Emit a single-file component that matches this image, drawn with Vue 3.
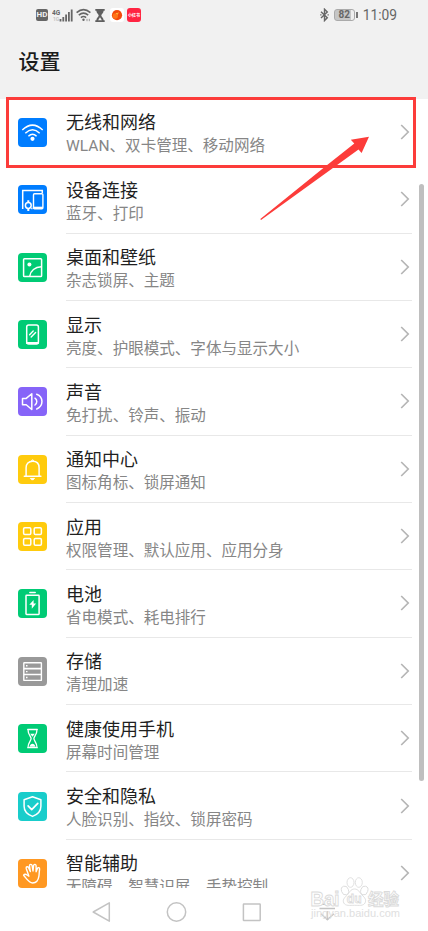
<script setup>
const rows = [
  { icon: 'wifi', color: '#007dff', title: '无线和网络', sub: 'WLAN、双卡管理、移动网络', plain: true },
  { icon: 'devices', color: '#007dff', title: '设备连接', sub: '蓝牙、打印' },
  { icon: 'wallpaper', color: '#00cb75', title: '桌面和壁纸', sub: '杂志锁屏、主题' },
  { icon: 'display', color: '#00cb75', title: '显示', sub: '亮度、护眼模式、字体与显示大小' },
  { icon: 'sound', color: '#8664f8', title: '声音', sub: '免打扰、铃声、振动' },
  { icon: 'bell', color: '#ffcb0d', title: '通知中心', sub: '图标角标、锁屏通知' },
  { icon: 'apps', color: '#ffcb0d', title: '应用', sub: '权限管理、默认应用、应用分身' },
  { icon: 'battery', color: '#00cb75', title: '电池', sub: '省电模式、耗电排行' },
  { icon: 'storage', color: '#999999', title: '存储', sub: '清理加速' },
  { icon: 'hourglass', color: '#00cb75', title: '健康使用手机', sub: '屏幕时间管理' },
  { icon: 'shield', color: '#19cdcb', title: '安全和隐私', sub: '人脸识别、指纹、锁屏密码' },
  { icon: 'hand', color: '#ff9822', title: '智能辅助', sub: '无障碍、智慧识屏、手势控制' },
]
</script>

<template>
  <div class="phone">
    <header class="top">
      <div class="status">
        <div class="status-left">
          <span class="hd">HD</span>
          <svg class="signal" width="21" height="15" viewBox="0 0 21 15">
            <text x="0" y="6.8" class="net">4G</text>
            <text x="1" y="12.5" class="net faint">1G</text>
            <path d="M8.5 13.500v-2.500M11.3 13.500V9M14.1 13.500V6.5M16.9 13.500V4M19.7 13.500V1.5" stroke="#666" stroke-width="1.8" />
          </svg>
          <svg class="net-wifi" width="15" height="14" viewBox="0 0 15 14" fill="none" stroke="#666" stroke-width="1.6">
            <path d="M.6 4.6Q7.5-1.4 14.4 4.6M2.8 7.2Q7.5 3.2 12.2 7.2M4.9 9.6Q7.5 7.4 10.1 9.6" />
            <circle cx="7.5" cy="11.8" r="1.2" fill="#666" stroke="none" />
            <path d="M11 10.8v2.4M13.3 10.8v2.4" stroke="#999" stroke-width="1" />
          </svg>
          <svg class="timer" width="10" height="13" viewBox="0 0 10 13">
            <path d="M.3 0h9.4v1.7H.3zM.3 11.3h9.4V13H.3zM1.3 1.5h7.4c0 2.8-2.4 3.6-2.4 5s2.4 2.2 2.4 5H7L5 8.2 3 11.5H1.3c0-2.8 2.4-3.6 2.4-5S1.3 4.3 1.3 1.5z" fill="#5f5f5f" />
          </svg>
          <svg class="ball" width="14" height="14" viewBox="0 0 14 14">
            <rect width="14" height="14" rx="3" fill="#fff" />
            <circle cx="7" cy="7.2" r="5.1" fill="#f24a0c" />
            <circle cx="5.3" cy="8" r="2.7" fill="#ff7417" />
            <path d="M6.2 5.2l1.2 1 .8-1.600" stroke="#ffd84a" fill="none" stroke-width=".9" />
          </svg>
          <span class="red-app">小红书</span>
        </div>
        <div class="status-right">
          <svg width="9" height="14" viewBox="0 0 9 14" fill="none" stroke="#666" stroke-width="1.4">
            <path d="M1 3.7l6.3 6L4.5 12.6V1.2L7.3 4 1 10" />
            <path d="M.2 6.9h1.3M7.5 6.9h1.3" />
          </svg>
          <span class="power">82</span>
          <i class="power-tip"></i>
          <span class="time">11:09</span>
        </div>
      </div>
      <h1>设置</h1>
    </header>

    <main class="list">
      <section v-for="row in rows" :key="row.icon" class="row">
        <svg class="icon" viewBox="0 0 29 29" fill="none" stroke="#fff" stroke-width="1.5" stroke-linecap="round" stroke-linejoin="round">
          <rect width="29" height="29" rx="4" :fill="row.color" stroke="none" />
          <g v-if="row.icon === 'wifi'" stroke-linecap="butt">
            <path d="M4.3 12Q14.5 2.2 24.7 12M7.3 15.2Q14.5 8.4 21.7 15.2M10.4 18.2Q14.5 14.4 18.6 18.2" />
            <circle cx="14.5" cy="20.8" r="2.1" fill="#fff" stroke="none" />
          </g>
          <g v-else-if="row.icon === 'devices'" stroke-linejoin="miter" stroke-linecap="butt">
            <path d="M4.7 24V5.5h19.6v2.4M13.2 23.5h1.3" />
            <rect x="15.5" y="8.8" width="9.4" height="15" rx="1" stroke-width="1.4" />
            <path d="M15.5 22.7h9.4" stroke-width="2" />
            <circle cx="10.3" cy="20.5" r="2.9" />
            <path d="M10.3 15.3v2.4M10.3 23.3v2.6" stroke-width="2" />
          </g>
          <g v-else-if="row.icon === 'wallpaper'">
            <rect x="5.6" y="5.7" width="18" height="17.8" rx=".8" />
            <circle cx="11.4" cy="11.4" r="2" fill="#fff" stroke="none" />
            <path d="M11.8 23C12.5 17.7 17 14 23.3 13.8" />
          </g>
          <g v-else-if="row.icon === 'display'">
            <rect x="8.7" y="5" width="11.7" height="18.9" rx="2" />
            <path d="M9 23h11" stroke-width="2.2" />
            <path d="M11.6 14.7l3.6-3.6M13.2 17l4.4-4.4" stroke-width="1.4" />
          </g>
          <g v-else-if="row.icon === 'sound'">
            <path d="M4.5 11.4h3.7l5.6-4.7v15.8l-5.6-4.8H4.5z" />
            <path d="M17 11.2c2.4 1.5 2.4 5.2 0 6.8M18.7 7.2c7 2.7 7 12.1 0 14.8" />
          </g>
          <g v-else-if="row.icon === 'bell'">
            <path d="M6.3 21.2h16.6M8.1 21v-8.2c0-4 2.5-6.6 6.5-6.6s6.5 2.6 6.5 6.6V21" />
            <path d="M13.5 5.6a1.2 1.2 0 0 1 2.2 0M12.7 23.4h3.8l-1.2 1.3h-1.4z" fill="#fff" stroke-width="1" />
          </g>
          <g v-else-if="row.icon === 'apps'">
            <rect x="5.6" y="5.8" width="7.2" height="6.7" rx="1.2" />
            <rect x="16.2" y="5.8" width="7.2" height="6.7" rx="1.2" />
            <rect x="5.6" y="16.5" width="7.2" height="6.7" rx="1.2" />
            <rect x="16.2" y="16.5" width="7.2" height="6.7" rx="1.2" />
          </g>
          <g v-else-if="row.icon === 'battery'" stroke-linejoin="miter">
            <rect x="8" y="6.3" width="13.1" height="19.1" rx=".6" />
            <path d="M11.9 3.5h5.3" />
            <path d="M15.6 11v3.6h2.5l-4.3 5.2v-4H11.3z" fill="#fff" stroke="none" />
          </g>
          <g v-else-if="row.icon === 'storage'" stroke-linecap="butt" stroke-width="1.4">
            <rect x="5.8" y="5.8" width="17.6" height="17.6" rx=".5" />
            <path d="M5.8 11.7h17.6M5.8 17.5h17.6" stroke-width="1.7" />
            <path d="M8 8.8h1.5M8 14.6h1.5M8 20.5h1.5" />
          </g>
          <g v-else-if="row.icon === 'hourglass'" stroke-width="1.3">
            <path d="M9.7 5.5h9.6M9.7 23.7h9.6M10 5.8c0 5 3.1 6.5 3.1 8.8S10 18.4 10 23.4M19 5.8c0 5-3.1 6.5-3.1 8.8s3.1 3.8 3.1 8.8" />
            <path d="M12.2 9.7h4.6l-2.3 3.1zM11.4 22.8c.7-2.1 1.8-3 3.1-3s2.4.9 3.1 3z" fill="#fff" stroke="none" />
          </g>
          <g v-else-if="row.icon === 'shield'">
            <path d="M14.5 4.8l8.4 3v6.4c0 4.7-3.2 8.2-8.4 10.2-5.2-2-8.4-5.5-8.4-10.2V7.8z" />
            <path d="M10.1 13.9l3.6 3.8 6.1-6.3" stroke-width="1.7" />
          </g>
          <g v-else stroke-width="1.4">
            <path d="M5.600 16.200c.8-1.300 2.300-1.100 3.400-.2l1.900 1.200-2.700-7.800c-.4-1.800 1.700-2.300 2.400-.7l1.700 3.800-.8-5.700c0-1.800 2.300-2 2.600-.2l.9 5.400.6-5.600c.4-1.600 2.500-1.200 2.500.4l0 5.900 1.300-3.300c.7-1.400 2.400-.8 2.200.8-.4 3.300-.4 4.600-.7 7-.6 4.400-2.700 6.800-6.300 6.800-3.500 0-5-2.900-9-7.800z" />
          </g>
        </svg>
        <div class="body" :class="{ plain: row.plain }">
          <div class="words">
            <div class="title">{{ row.title }}</div>
            <div class="sub">{{ row.sub }}</div>
          </div>
          <svg class="chevron" width="10" height="16" viewBox="0 0 10 16" fill="none" stroke="#b5b5b5" stroke-width="1.7">
            <path d="M1.2 1l7 7-7 7" />
          </svg>
        </div>
      </section>
    </main>

    <nav class="nav">
      <svg width="428" height="43" viewBox="0 0 428 43" fill="none" stroke="#c3c3c3" stroke-width="1.5" stroke-linejoin="round">
        <path d="M109.3 14.8v18.4L93.2 24z" />
        <circle cx="176.5" cy="24" r="9.2" />
        <rect x="243.4" y="15.9" width="16.8" height="16.6" rx=".5" />
        <path d="M319.500 16.200h15.500M319.500 20.400h15.500M327.400 23v8.500M321 25.800l6.400 6 6.400-6" />
      </svg>
    </nav>

    <i class="scrollbar"></i>

    <svg class="watermark" width="96" height="46" viewBox="0 0 96 46">
      <g fill="#fff" stroke="#dcdcdc" stroke-width=".9">
        <ellipse cx="37" cy="14.500" rx="3.500" ry="4.500" transform="rotate(-18 37 14.500)" />
        <ellipse cx="42.500" cy="6.500" rx="3.500" ry="4.800" />
        <ellipse cx="50.800" cy="6.500" rx="3.500" ry="4.800" />
        <ellipse cx="56.300" cy="14.500" rx="3.500" ry="4.500" transform="rotate(18 56.300 14.500)" />
        <path d="M46.500 13c4 0 5 3.500 7.500 6 3.200 3 4.500 5 3 8-1.800 3.200-6 2.300-10.500 2.300S37.500 30.200 35.800 27c-1.500-3 .3-5 3.400-8 2.400-2.500 3.300-6 7.300-6z" />
      </g>
      <text x="2.500" y="30.200" class="wm-bai" textLength="29" lengthAdjust="spacingAndGlyphs">Bai</text>
      <text x="38.800" y="27" class="wm-du">du</text>
      <text x="60" y="29.300" class="wm-cn">经验</text>
      <text x="3" y="41" class="wm-url" textLength="89" lengthAdjust="spacingAndGlyphs">jingyan.baidu.com</text>
    </svg>

    <svg class="mark" width="428" height="240" viewBox="0 0 428 240">
      <rect x="7.5" y="98.5" width="407" height="68" fill="none" stroke="#fc3c3a" stroke-width="3" />
      <path d="M260.300 219L324 167.500 354.300 143.500 350.800 139.800 369 136.800 361.600 153 358.500 149.500 329.500 170.500 261 220Z" fill="#fc3c3a" />
    </svg>
  </div>
</template>

<style>
body {
  background: #fff;
}
</style>

<style scoped>
.phone {
  position: relative;
  display: flex;
  flex-direction: column;
  width: 428px;
  height: 931px;
  overflow: hidden;
  background: #fff;
  font-family: Roboto, "Noto Sans CJK SC", sans-serif;
}
.top {
  flex: none;
  box-sizing: border-box;
  height: 98.8px;
  background: #f1f1f1;
}
.status {
  display: flex;
  justify-content: space-between;
  align-items: center;
  height: 30px;
  padding: 0 31px 0 36px;
}
.status-left,
.status-right {
  display: flex;
  align-items: center;
}
.hd {
  width: 12px;
  height: 12px;
  border-radius: 2px;
  background: #666;
  color: #f1f1f1;
  font: bold 8px/12px Roboto, sans-serif;
  text-align: center;
}
.signal {
  margin-left: 4px;
}
.net {
  font: bold 6.5px Roboto, sans-serif;
  fill: #666;
}
.faint {
  font-size: 5px;
  fill: #c4c4c4;
}
.net-wifi {
  margin-left: 3px;
}
.timer {
  margin-left: 4px;
}
.ball {
  margin-left: 5px;
}
.red-app {
  width: 14px;
  height: 14px;
  margin-left: 3px;
  border-radius: 3px;
  background: #ff2442;
  color: #fff;
  font: bold 4px/14px "Noto Sans CJK SC", sans-serif;
  text-align: center;
}
.status-right svg {
  margin-right: -1px;
}
.power {
  width: 21px;
  height: 12px;
  margin-left: 6px;
  box-sizing: border-box;
  border: 1px solid #aaa;
  border-radius: 3px;
  background: linear-gradient(90deg, #c6c6c6 82%, #eee 82%);
  color: #666;
  font: bold 10px/10px Roboto, sans-serif;
  text-align: center;
}
.power-tip {
  width: 2px;
  height: 6px;
  margin-left: 1px;
  background: #777;
}
.time {
  margin-left: 5px;
  font-size: 13.8px;
  line-height: 20px;
  color: #666;
}
h1 {
  margin: 17px 0 0 18.5px;
  font-size: 21px;
  font-weight: 500;
  line-height: 31px;
  color: #1c1c1c;
}
.list {
  flex: none;
  height: 789.6px;
  overflow: hidden;
}
.row {
  display: flex;
  align-items: center;
  height: 67.36px;
  padding: 0 16px 0 18px;
}
.icon {
  flex: none;
  width: 29px;
  height: 29px;
}
.body {
  display: flex;
  flex: 1;
  justify-content: space-between;
  align-items: center;
  box-sizing: border-box;
  height: 100%;
  margin-left: 19px;
  padding-right: 2px;
  border-bottom: 1px solid #e8e8e8;
}
.plain {
  border-bottom-color: transparent;
}
.words {
  padding-top: 5px;
  white-space: nowrap;
}
.title {
  font-size: 18px;
  line-height: 24px;
  color: #1f1f1f;
}
.sub {
  font-size: 15.56px;
  line-height: 22px;
  color: #868686;
}
.nav {
  flex: none;
  height: 43px;
}
.nav svg {
  display: block;
}
.scrollbar {
  position: absolute;
  top: 184px;
  left: 419px;
  width: 5px;
  height: 597px;
  border-radius: 3px;
  background: #bfbfbf;
}
.watermark {
  position: absolute;
  left: 308px;
  top: 876px;
}
.wm-bai,
.wm-du,
.wm-cn,
.wm-url {
  fill: #fff;
  stroke: #dadada;
  stroke-width: .9px;
  font-family: "Liberation Sans", "Noto Sans CJK SC", sans-serif;
  font-weight: bold;
}
.wm-bai {
  font-size: 19.5px;
}
.wm-du {
  font-size: 12px;
  stroke-width: .8px;
}
.wm-cn {
  font-size: 15.5px;
}
.wm-url {
  font-size: 10.5px;
  font-weight: normal;
  fill: #e0e0e0;
  stroke: none;
}
.mark {
  position: absolute;
  left: 0;
  top: 0;
}
</style>
